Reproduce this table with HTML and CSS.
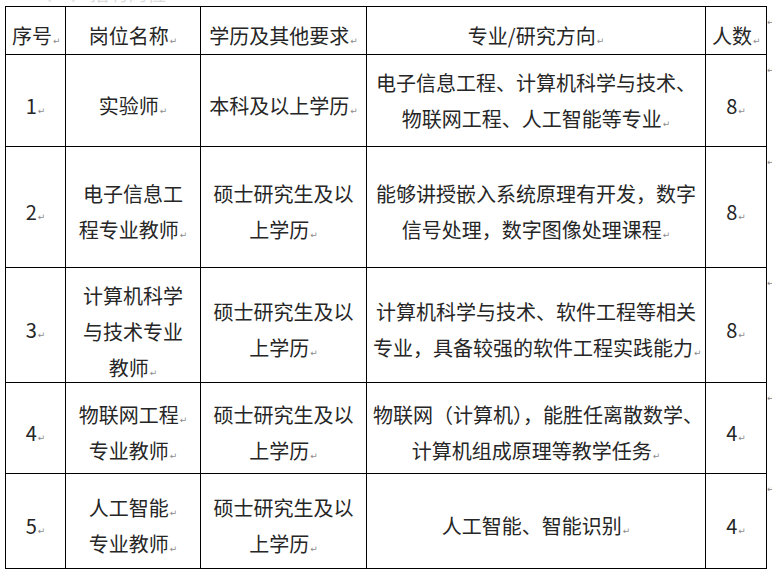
FILE: index.html
```html
<!DOCTYPE html>
<html lang="zh-CN">
<head>
<meta charset="utf-8">
<title>招聘岗位</title>
<link rel="stylesheet" href="styles.css">
</head>
<body>
<div class="page">
  <div class="prev"><span>（一）招聘岗位</span></div>
  <table class="jobs">
    <colgroup>
      <col class="c-no"><col class="c-name"><col class="c-edu"><col class="c-major"><col class="c-num"><col class="c-end">
    </colgroup>
    <tr class="r-head">
      <td>序号<span class="pm">↵</span></td>
      <td>岗位名称<span class="pm">↵</span></td>
      <td>学历及其他要求<span class="pm">↵</span></td>
      <td>专业/研究方向<span class="pm">↵</span></td>
      <td>人数<span class="pm">↵</span></td>
      <td class="end"><span class="pm">↵</span></td>
    </tr>
    <tr class="r1">
      <td>1<span class="pm">↵</span></td>
      <td>实验师<span class="pm">↵</span></td>
      <td>本科及以上学历<span class="pm">↵</span></td>
      <td class="major even">电子信息工程、计算机科学与技术、<br>物联网工程、人工智能等专业<span class="pm">↵</span></td>
      <td>8<span class="pm">↵</span></td>
      <td class="end"><span class="pm">↵</span></td>
    </tr>
    <tr class="r2">
      <td>2<span class="pm">↵</span></td>
      <td>电子信息工<br>程专业教师<span class="pm">↵</span></td>
      <td>硕士研究生及以<br>上学历<span class="pm">↵</span></td>
      <td class="major">能够讲授嵌入系统原理有开发，数字<br>信号处理，数字图像处理课程<span class="pm">↵</span></td>
      <td>8<span class="pm">↵</span></td>
      <td class="end"><span class="pm">↵</span></td>
    </tr>
    <tr class="r3">
      <td>3<span class="pm">↵</span></td>
      <td class="tall"><div class="shift">计算机科学<br>与技术专业<br>教师<span class="pm">↵</span></div></td>
      <td>硕士研究生及以<br>上学历<span class="pm">↵</span></td>
      <td class="major">计算机科学与技术、软件工程等相关<br>专业，具备较强的软件工程实践能力<span class="pm">↵</span></td>
      <td>8<span class="pm">↵</span></td>
      <td class="end"><span class="pm">↵</span></td>
    </tr>
    <tr class="r4">
      <td>4<span class="pm">↵</span></td>
      <td>物联网工程<span class="pm">↵</span><br>专业教师<span class="pm">↵</span></td>
      <td>硕士研究生及以<br>上学历<span class="pm">↵</span></td>
      <td class="major">物联网（计算机），能胜任离散数学、<br>计算机组成原理等教学任务<span class="pm">↵</span></td>
      <td>4<span class="pm">↵</span></td>
      <td class="end"><span class="pm">↵</span></td>
    </tr>
    <tr class="r5">
      <td>5<span class="pm">↵</span></td>
      <td>人工智能<span class="pm">↵</span><br>专业教师<span class="pm">↵</span></td>
      <td>硕士研究生及以<br>上学历<span class="pm">↵</span></td>
      <td class="major">人工智能、智能识别<span class="pm">↵</span></td>
      <td>4<span class="pm">↵</span></td>
      <td class="end"><span class="pm">↵</span></td>
    </tr>
  </table>
</div>
</body>
</html>
```

FILE: styles.css
```css
html, body {
  margin: 0;
  padding: 0;
  background: #ffffff;
}

body {
  font-family: "Noto Sans CJK SC", "Noto Sans", sans-serif;
  color: #262626;
}

.page {
  padding: 0 0 0 5px;
}

.prev {
  height: 6px;
  overflow: hidden;
  display: flex;
  align-items: flex-end;
  padding-left: 28px;
  color: #dcdcdc;
  font-size: 19px;
  line-height: 20px;
}

.prev span {
  display: block;
  margin-bottom: 3px;
}

.jobs {
  border-collapse: collapse;
  table-layout: fixed;
  width: 767px;
}

.c-no { width: 60px; }
.c-name { width: 135px; }
.c-edu { width: 166px; }
.c-major { width: 339px; }
.c-num { width: 61px; }
.c-end { width: 6px; }

.jobs td {
  box-sizing: border-box;
  border: 1px solid #000;
  text-align: center;
  vertical-align: middle;
  font-size: 20px;
  line-height: 36px;
  padding: 10px 6px 0;
  white-space: nowrap;
  overflow: visible;
}

.jobs td.even {
  padding-top: 1px;
}

.jobs td.tall {
  padding-top: 0;
}

.shift {
  margin-top: 7px;
  margin-bottom: -7px;
}

.jobs td.end {
  border: none;
  padding: 9px 0 0;
  vertical-align: top;
  text-align: left;
  line-height: 10px;
  font-size: 10px;
}

.jobs td.end .pm {
  margin-left: 0;
}

.r-head td { height: 48px; }
.r1 td { height: 92px; }
.r2 td { height: 121px; }
.r3 td { height: 115px; }
.r4 td { height: 91px; }
.r5 td { height: 95px; }

.pm {
  font-family: "DejaVu Sans", sans-serif;
  font-size: 9px;
  line-height: 1;
  color: #8c8c8c;
  margin-left: 1px;
}
```
